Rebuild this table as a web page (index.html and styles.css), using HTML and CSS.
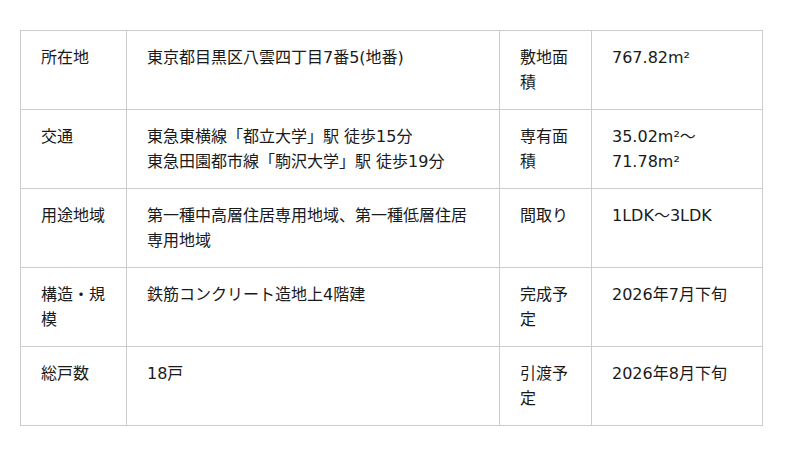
FILE: index.html
```html
<!DOCTYPE html>
<html lang="ja">
<head>
<meta charset="utf-8">
<link rel="stylesheet" href="styles.css">
</head>
<body>
<table class="spec">
  <colgroup>
    <col class="c1"><col class="c2"><col class="c3"><col class="c4">
  </colgroup>
  <tr>
    <th>所在地</th>
    <td>東京都目黒区八雲四丁目7番5(地番)</td>
    <th>敷地面積</th>
    <td>767.82m²</td>
  </tr>
  <tr>
    <th>交通</th>
    <td>東急東横線「都立大学」駅 徒歩15分<br>東急田園都市線「駒沢大学」駅 徒歩19分</td>
    <th>専有面積</th>
    <td>35.02m²〜71.78m²</td>
  </tr>
  <tr>
    <th>用途地域</th>
    <td>第一種中高層住居専用地域、第一種低層住居専用地域</td>
    <th>間取り</th>
    <td>1LDK〜3LDK</td>
  </tr>
  <tr>
    <th>構造・規模</th>
    <td>鉄筋コンクリート造地上4階建</td>
    <th>完成予定</th>
    <td>2026年7月下旬</td>
  </tr>
  <tr>
    <th>総戸数</th>
    <td>18戸</td>
    <th>引渡予定</th>
    <td>2026年8月下旬</td>
  </tr>
</table>
</body>
</html>
```
FILE: styles.css
```css
html, body {
  margin: 0;
  padding: 0;
  background: #fff;
}
body {
  padding: 30px 0 0 20px;
  font-family: "DejaVu Sans", "Noto Sans CJK JP", sans-serif;
  font-size: 16px;
  line-height: 25px;
  color: #1a1a1a;
}
.spec {
  border-collapse: collapse;
  table-layout: fixed;
  width: 742px;
}
.c1 { width: 106px; }
.c2 { width: 373px; }
.c3 { width: 92px; }
.c4 { width: 171px; }
.spec tr { height: 79px; }
.spec th, .spec td {
  border: 1px solid #cccccc;
  padding: 14px 20px;
  vertical-align: top;
  text-align: left;
  font-weight: normal;
}
```
